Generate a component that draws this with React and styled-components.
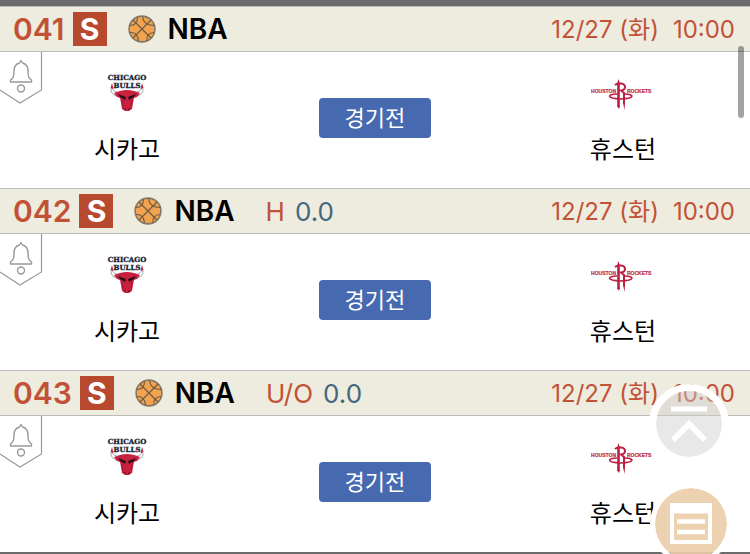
import React, { useState } from "react";
import styled, { createGlobalStyle } from "styled-components";

const GAMES = [
  { no: "041", league: "NBA", date: "12/27 (화)", time: "10:00" },
  { no: "042", league: "NBA", type: "H", point: "0.0", date: "12/27 (화)", time: "10:00" },
  { no: "043", league: "NBA", type: "U/O", point: "0.0", date: "12/27 (화)", time: "10:00" },
];

function Basketball() {
  return (
    <svg width="28" height="28" viewBox="0 0 28 28" fill="none" aria-hidden="true">
      <circle cx="14" cy="14" r="12.900" fill="#f2a350" stroke="#85796a" strokeWidth="1.6" />
      <g stroke="#6a5a45" strokeWidth="1.100">
        <path d="M5 5 L23 23 M23 5 L5 23" />
        <path d="M1.500 10.500 C6 10.500 9.500 8 9.500 2.500" />
        <path d="M14.500 1.500 C15 7 19 10.500 26.500 10.500" />
        <path d="M2 17.500 C7 17 10 20 10.500 26" />
        <path d="M19 26 C18 21 21 17.500 26 17.500" />
      </g>
    </svg>
  );
}

function BullsLogo() {
  return (
    <svg width="64" height="44" viewBox="0 -2 64 44" aria-hidden="true">
      <g
        fill="#15202c"
        stroke="#15202c"
        strokeWidth="0.3"
        fontFamily="'DejaVu Serif', serif"
        fontWeight="700"
        fontSize="7"
        textAnchor="middle"
      >
        <text x="32" y="8">CHICAGO</text>
        <text x="32" y="16">BULLS</text>
      </g>
      <path
        d="M17 14 C14 20 18 25 27 24 L26 20 C21 21 17 19 17 14Z M47 14 C50 20 46 25 37 24 L38 20 C43 21 47 19 47 14Z"
        fill="#fff"
        stroke="#8d8d91"
        strokeWidth="0.8"
      />
      <path d="M17 11 L15.500 16 L18.500 17Z M47 11 L48.500 16 L45.500 17Z" fill="#c8203f" />
      <path
        d="M25 19 Q32 17 39 19 L45 21 L42 25 L39 26 L38 31 L37 37 L34 39 L30 39 L27 37 L26 31 L25 26 L22 25 L19 21Z"
        fill="#c8203f"
      />
      <path
        d="M23 22 L31 25 L30 28 L25 25Z M41 22 L33 25 L34 28 L39 25Z"
        fill="#2a1119"
      />
      <path d="M29 36 L31 37 L30 38Z M35 36 L33 37 L34 38Z" fill="#2a1119" />
      <path d="M27 28 L28 35 M37 28 L36 35" stroke="#8d1730" strokeWidth="0.8" />
    </svg>
  );
}

function RocketsLogo() {
  return (
    <svg width="64" height="44" viewBox="0 -2 64 44" aria-hidden="true">
      <g
        fill="#b92f50"
        stroke="#b92f50"
        strokeWidth="0.2"
        fontFamily="'Liberation Sans', sans-serif"
        fontWeight="700"
        fontSize="5"
      >
        <text x="25" y="21" textAnchor="end">HOUSTON</text>
        <text x="36" y="21">ROCKETS</text>
      </g>
      <g fill="none" stroke="#bd1f42">
        <path d="M27.500 11 V35" strokeWidth="2.6" />
        <path
          d="M24 13 Q26 11 30 11.500 Q34 12 34 15 Q34 18 30 18.500 L33 21 V32"
          strokeWidth="2"
        />
        <path
          d="M26 22 C16 22 15 26.500 29.500 27 C45 26.500 43 22 34 22"
          strokeWidth="1.600"
        />
      </g>
      <path d="M27.500 7 L29 12 L26 12Z M26 34 L29 34 L28 37Z M32 31 L34 31 L33.500 38Z" fill="#bd1f42" />
    </svg>
  );
}

function Game({ game }) {
  const [alarm, setAlarm] = useState(false);

  return (
    <GameBox>
      <GameHeader>
        <GameNo>{game.no}</GameNo>
        <SingleMark>S</SingleMark>
        <BallIcon>
          <Basketball />
        </BallIcon>
        <League>{game.league}</League>
        {game.type ? (
          <Handicap>
            <BetType>{game.type}</BetType>
            <Point>{game.point}</Point>
          </Handicap>
        ) : (
          ""
        )}
        <GameDate>
          <span>{game.date}</span>
          <span>{game.time}</span>
        </GameDate>
      </GameHeader>
      <GameBody>
        <AlarmBtn
          type="button"
          aria-label="알림"
          aria-pressed={alarm}
          onClick={() => setAlarm(!alarm)}
        >
          <svg width="43" height="53" viewBox="0 0 43 53" fill="none">
            <path d="M41.500 0 V38 L20 51 L0 38 V0Z" fill="#fff" />
            <path d="M41.500 0 V38 L20 51 L0 38" stroke="#999" strokeWidth="1.2" />
            <g stroke="#999" strokeWidth="1.4" strokeLinejoin="round">
              <path d="M21 8.500 L19.500 11 C15.500 12 14 15 14 19 C14 24 13.500 26 10.500 28 V30 H31.500 V28 C28.500 26 28 24 28 19 C28 15 26.500 12 22.500 11Z" />
              <circle cx="21" cy="36.500" r="3.500" />
            </g>
          </svg>
        </AlarmBtn>
        <Team>
          <BullsLogo />
          <TeamName>시카고</TeamName>
        </Team>
        <State>경기전</State>
        <Team>
          <RocketsLogo />
          <TeamName>휴스턴</TeamName>
        </Team>
      </GameBody>
    </GameBox>
  );
}

function App() {
  return (
    <MainDiv>
      <GlobalStyle />
      <GameList>
        {GAMES.map((game) => (
          <Game key={game.no} game={game} />
        ))}
      </GameList>
      <ScrollThumb />
      <TopBtn
        type="button"
        aria-label="맨 위로"
        onClick={() => window.scrollTo({ top: 0, behavior: "smooth" })}
      >
        <svg width="36" height="36" viewBox="0 0 36 36" fill="none" stroke="#fff">
          <path d="M0 3 H36" strokeWidth="5" />
          <path d="M2 34 L18 18 L34 34" strokeWidth="5.500" />
        </svg>
      </TopBtn>
      <SlipBtn type="button" aria-label="구매 목록">
        <svg width="42" height="42" viewBox="0 0 42 42" fill="none" stroke="#fff">
          <path d="M2 2 H40 V39 H2Z" strokeWidth="4" />
          <path d="M2 6 H40" strokeWidth="9" />
          <path d="M7 18.500 H35 M7 29 H35" strokeWidth="4.500" />
        </svg>
      </SlipBtn>
    </MainDiv>
  );
}

const GlobalStyle = createGlobalStyle`
  * {
    box-sizing: border-box;
  }

  body {
    margin: 0;
    background-color: white;
    font-family: Inter, "Noto Sans CJK KR", sans-serif;
  }
`;

const MainDiv = styled.div`
  width: 100%;
`;

const GameList = styled.main`
  border-top: 6px solid #6b6b6b;
  border-bottom: 2px solid #6b6b6b;
`;

const GameBox = styled.section`
  width: 100%;
`;

const GameHeader = styled.header`
  display: flex;
  align-items: center;
  height: 46px;
  padding: 0 15px 0 13px;
  background-color: #eeecdf;
  border-top: 1px solid #bbb;
  border-bottom: 1px solid #bbb;
  white-space: nowrap;
`;

const GameNo = styled.span`
  font-size: 30px;
  font-weight: 600;
  color: #c25235;
`;

const SingleMark = styled.span`
  display: flex;
  justify-content: center;
  align-items: center;
  width: 34px;
  height: 34px;
  margin-left: 8px;
  font-size: 30px;
  font-weight: 700;
  color: white;
  background-color: #b7492e;
`;

const BallIcon = styled.span`
  display: flex;
  margin: 0 12px 0 21px;
`;

const League = styled.span`
  font-size: 28px;
  font-weight: 600;
  color: black;
`;

const Handicap = styled.span`
  display: flex;
  gap: 10px;
  margin-left: 31px;
  font-size: 26px;
`;

const BetType = styled.span`
  color: #c25235;
`;

const Point = styled.span`
  color: #44677d;
`;

const GameDate = styled.span`
  display: flex;
  align-items: baseline;
  gap: 14px;
  margin-left: auto;
  padding-top: 2px;
  font-size: 24px;
  line-height: 32px;
  color: #c25235;
`;

const GameBody = styled.div`
  position: relative;
  display: grid;
  grid-template-columns: 21fr 20fr 21fr;
  align-items: center;
  justify-items: center;
  padding: 18px 0 22px;
`;

const AlarmBtn = styled.button`
  position: absolute;
  top: 0;
  left: 0;
  display: flex;
  padding: 0;
  border: none;
  background: none;
  cursor: pointer;
`;

const Team = styled.div`
  display: flex;
  flex-direction: column;
  align-items: center;
  gap: 20px;
`;

const TeamName = styled.span`
  font-size: 24px;
  line-height: 32px;
  color: black;
`;

const State = styled.span`
  width: 112px;
  border-radius: 4px;
  font-size: 22px;
  line-height: 40px;
  text-align: center;
  color: white;
  background-color: #4769b0;
`;

const ScrollThumb = styled.div`
  position: fixed;
  top: 46px;
  right: 6px;
  width: 6px;
  height: 72px;
  border-radius: 3px;
  background-color: rgba(0, 0, 0, 0.36);
`;

const RoundBtn = styled.button`
  position: fixed;
  display: flex;
  justify-content: center;
  align-items: center;
  padding: 0;
  border-style: solid;
  border-color: white;
  border-radius: 50%;
  background-clip: padding-box;
  cursor: pointer;
`;

const TopBtn = styled(RoundBtn)`
  right: 21px;
  bottom: 90px;
  width: 80px;
  height: 80px;
  border-width: 7px;
  background-color: rgba(205, 205, 205, 0.45);
`;

const SlipBtn = styled(RoundBtn)`
  right: 18px;
  bottom: -11px;
  width: 82px;
  height: 82px;
  border-width: 5px;
  background-color: rgba(234, 205, 168, 0.9);
`;

export default App;
